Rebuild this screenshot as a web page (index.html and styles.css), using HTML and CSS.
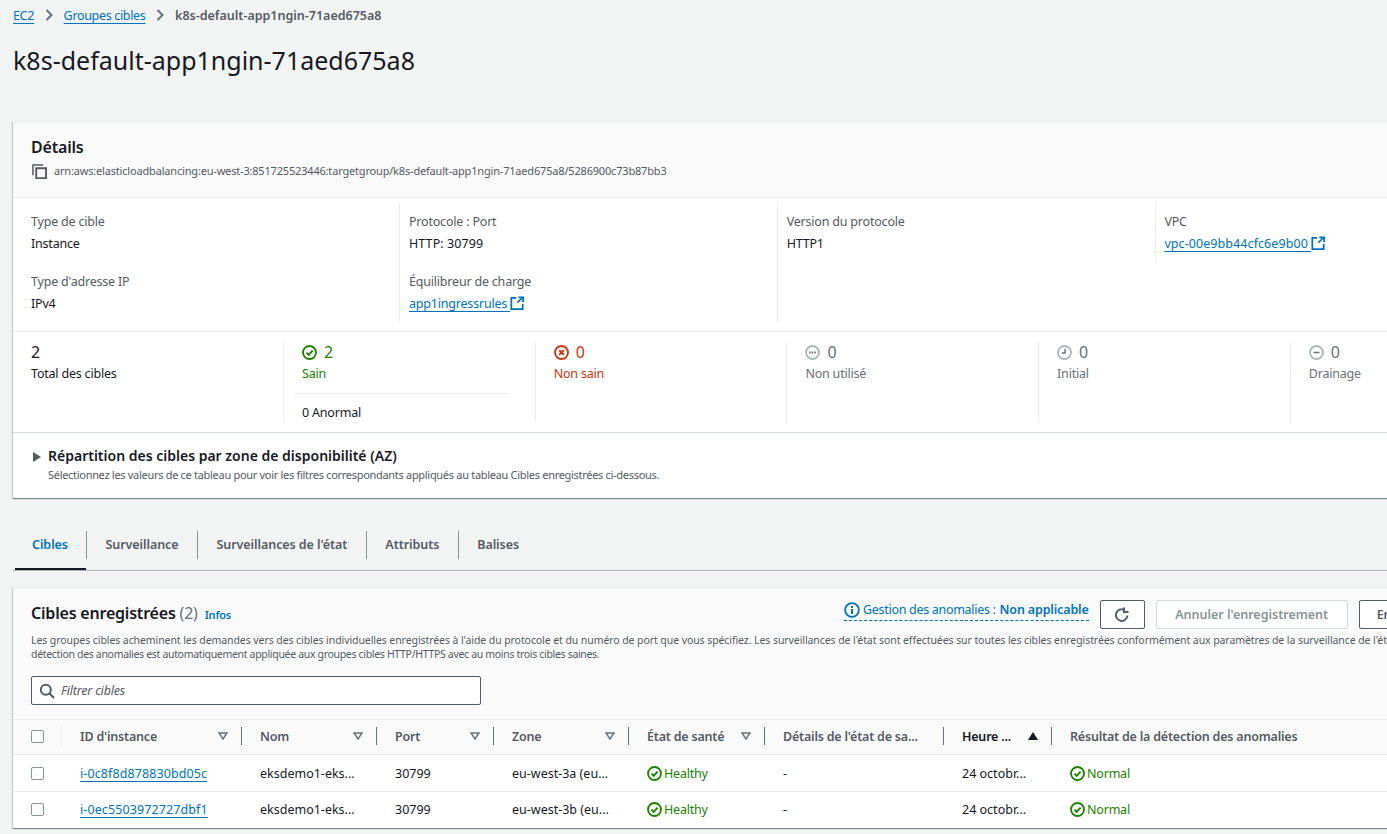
FILE: index.html
```html
<!doctype html>
<html lang="fr">
<head>
    <meta charset="UTF-8">
    <title>k8s-default-app1ngin-71aed675a8</title>
    <link rel="stylesheet" href="styles.css">
</head>
<body>
    <svg class="defs" width="0" height="0">
        <symbol id="i-ext" viewBox="0 0 16 16"><path d="M14.500 9v6H1.500V2H7" fill="none" stroke="currentColor" stroke-width="2"/><path d="M8.500 7.500L14 2M9.500 1.500H15V7" fill="none" stroke="currentColor" stroke-width="2"/></symbol>
        <symbol id="i-ok" viewBox="0 0 16 16"><circle cx="8" cy="8" r="6.900" fill="none" stroke="currentColor" stroke-width="2"/><path d="M4.800 8.200l2.300 2.300 4.200-4.600" fill="none" stroke="currentColor" stroke-width="2"/></symbol>
        <symbol id="i-bad" viewBox="0 0 16 16"><circle cx="8" cy="8" r="6.900" fill="none" stroke="currentColor" stroke-width="2"/><path d="M5.600 5.600l4.800 4.800M10.400 5.600l-4.800 4.800" fill="none" stroke="currentColor" stroke-width="2"/></symbol>
        <symbol id="i-unused" viewBox="0 0 16 16"><circle cx="8" cy="8" r="6.900" fill="none" stroke="currentColor" stroke-width="2"/><path d="M4.500 7h1.600v2H4.500zM7.200 7h1.600v2H7.200zM9.900 7h1.600v2H9.900z" fill="#687078"/></symbol>
        <symbol id="i-clock" viewBox="0 0 16 16"><circle cx="8" cy="8" r="6.900" fill="none" stroke="currentColor" stroke-width="2"/><path d="M8.600 4v4.600H5.200" fill="none" stroke="#687078" stroke-width="1.500"/></symbol>
        <symbol id="i-minus" viewBox="0 0 16 16"><circle cx="8" cy="8" r="6.900" fill="none" stroke="currentColor" stroke-width="2"/><path d="M4.800 8h6.400" fill="none" stroke="#687078" stroke-width="1.600"/></symbol>
        <symbol id="i-filter" viewBox="0 0 10 8"><path d="M1 1h8L5 7z" fill="none" stroke="currentColor" stroke-width="1.500"/></symbol>
    </svg>

    <nav class="crumbs">
        <a href="#">EC2</a>
        <svg class="crumb-sep" width="16" height="16" viewBox="0 0 16 16"><path d="M5.500 3L10.500 8l-5 5" fill="none" stroke="currentColor" stroke-width="2"/></svg>
        <a href="#">Groupes cibles</a>
        <svg class="crumb-sep" width="16" height="16" viewBox="0 0 16 16"><path d="M5.500 3L10.500 8l-5 5" fill="none" stroke="currentColor" stroke-width="2"/></svg>
        <span class="crumb-current">k8s-default-app1ngin-71aed675a8</span>
    </nav>

    <h1>k8s-default-app1ngin-71aed675a8</h1>

    <section class="card details">
        <header class="details-head">
            <h2>Détails</h2>
            <div class="arn">
                <svg class="arn-copy" width="15" height="15" viewBox="0 0 16 16"><path d="M1 12V1h11" fill="none" stroke="currentColor" stroke-width="1.600"/><path d="M4.500 4.500h10.500v10.500H4.500z" fill="none" stroke="currentColor" stroke-width="2"/></svg>
                <span>arn:aws:elasticloadbalancing:eu-west-3:851725523446:targetgroup/k8s-default-app1ngin-71aed675a8/5286900c73b87bb3</span>
            </div>
        </header>

        <div class="props">
            <div class="prop-col">
                <div class="prop"><div class="prop-label">Type de cible</div><div class="prop-value">Instance</div></div>
                <div class="prop"><div class="prop-label">Type d'adresse IP</div><div class="prop-value">IPv4</div></div>
            </div>
            <div class="prop-col">
                <div class="prop"><div class="prop-label">Protocole : Port</div><div class="prop-value wide">HTTP: 30799</div></div>
                <div class="prop"><div class="prop-label">Équilibreur de charge</div><div class="prop-value"><a href="#">app1ingressrules&nbsp;</a><svg class="ext"><use href="#i-ext"/></svg></div></div>
            </div>
            <div class="prop-col prop-col-open">
                <div class="prop"><div class="prop-label">Version du protocole</div><div class="prop-value">HTTP1</div></div>
            </div>
            <div class="prop-col prop-col-short">
                <div class="prop"><div class="prop-label">VPC</div><div class="prop-value wide"><a href="#">vpc-00e9bb44cfc6e9b00&nbsp;</a><svg class="ext"><use href="#i-ext"/></svg></div></div>
            </div>
        </div>

        <div class="stats">
            <div class="stat stat-first">
                <div class="stat-num">2</div>
                <div class="stat-label">Total des cibles</div>
            </div>
            <div class="stat stat-ok">
                <div class="stat-num"><svg class="stat-icon"><use href="#i-ok"/></svg>2</div>
                <div class="stat-label">Sain</div>
                <div class="stat-extra">0 Anormal</div>
            </div>
            <div class="stat stat-bad">
                <div class="stat-num"><svg class="stat-icon"><use href="#i-bad"/></svg>0</div>
                <div class="stat-label">Non sain</div>
            </div>
            <div class="stat stat-off">
                <div class="stat-num"><svg class="stat-icon"><use href="#i-unused"/></svg>0</div>
                <div class="stat-label">Non utilisé</div>
            </div>
            <div class="stat stat-off">
                <div class="stat-num"><svg class="stat-icon"><use href="#i-clock"/></svg>0</div>
                <div class="stat-label">Initial</div>
            </div>
            <div class="stat stat-off">
                <div class="stat-num"><svg class="stat-icon"><use href="#i-minus"/></svg>0</div>
                <div class="stat-label">Drainage</div>
            </div>
        </div>

        <div class="az">
            <span class="az-caret"></span>
            <div>
                <h3>Répartition des cibles par zone de disponibilité (AZ)</h3>
                <p>Sélectionnez les valeurs de ce tableau pour voir les filtres correspondants appliqués au tableau Cibles enregistrées ci-dessous.</p>
            </div>
        </div>
    </section>

    <div class="tabs">
        <a class="tab tab-active" href="#">Cibles</a>
        <a class="tab" href="#">Surveillance</a>
        <a class="tab" href="#">Surveillances de l'état</a>
        <a class="tab" href="#">Attributs</a>
        <a class="tab" href="#">Balises</a>
    </div>

    <section class="card targets">
        <div class="targets-head">
            <div class="targets-top">
                <h2>Cibles enregistrées <span class="count">(2)</span> <a class="info" href="#">Infos</a></h2>
                <div class="targets-actions">
                    <span class="anomaly">
                        <svg width="16" height="16" viewBox="0 0 16 16"><circle cx="8" cy="8" r="6.900" fill="none" stroke="currentColor" stroke-width="1.800"/><path d="M8 7v5M8 4v2" fill="none" stroke="currentColor" stroke-width="2"/></svg>
                        Gestion des anomalies : <b>Non applicable</b>
                    </span>
                    <button class="btn btn-icon"><svg width="16" height="16" viewBox="0 0 16 16"><path d="M13.500 8.500A5.800 5.800 0 1 1 10.500 3" fill="none" stroke="currentColor" stroke-width="2"/><path d="M10 0.500v4.500h4.500" fill="none" stroke="currentColor" stroke-width="2"/></svg></button>
                    <button class="btn btn-off">Annuler l'enregistrement</button>
                    <button class="btn">Enregistrer des cibles</button>
                </div>
            </div>
            <p class="targets-desc">Les groupes cibles acheminent les demandes vers des cibles individuelles enregistrées à l'aide du protocole et du numéro de port que vous spécifiez. Les surveillances de l'état sont effectuées sur toutes les cibles enregistrées conformément aux paramètres de la surveillance de l'état du groupe cible.<br><span class="desc-second">détection des anomalies est automatiquement appliquée aux groupes cibles HTTP/HTTPS avec au moins trois cibles saines.</span></p>
            <div class="filter">
                <svg width="16" height="16" viewBox="0 0 16 16"><circle cx="6.800" cy="6.800" r="5" fill="none" stroke="currentColor" stroke-width="2"/><path d="M10.500 10.500l4.500 4.500" fill="none" stroke="currentColor" stroke-width="2"/></svg>
                <span>Filtrer cibles</span>
            </div>
        </div>

        <table class="grid">
            <colgroup>
                <col class="c-check"><col class="c-id"><col class="c-name"><col class="c-port"><col class="c-zone"><col class="c-health"><col class="c-detail"><col class="c-time"><col class="c-result">
            </colgroup>
            <thead>
                <tr>
                    <th><div class="th-in th-check"><span class="box"></span></div></th>
                    <th><div class="th-in">ID d'instance<svg class="sort"><use href="#i-filter"/></svg></div></th>
                    <th><div class="th-in">Nom<svg class="sort"><use href="#i-filter"/></svg></div></th>
                    <th><div class="th-in">Port<svg class="sort"><use href="#i-filter"/></svg></div></th>
                    <th><div class="th-in">Zone<svg class="sort"><use href="#i-filter"/></svg></div></th>
                    <th><div class="th-in">État de santé<svg class="sort"><use href="#i-filter"/></svg></div></th>
                    <th><div class="th-in">Détails de l'état de sa...</div></th>
                    <th class="th-sorted"><div class="th-in">Heure ...<span class="sort-up"></span></div></th>
                    <th class="th-last"><div class="th-in">Résultat de la détection des anomalies</div></th>
                </tr>
            </thead>
            <tbody>
                <tr>
                    <td><span class="box"></span></td>
                    <td><a class="id-link" href="#">i-0c8f8d878830bd05c</a></td>
                    <td>eksdemo1-eks...</td>
                    <td>30799</td>
                    <td>eu-west-3a (eu...</td>
                    <td class="good"><svg class="good-icon"><use href="#i-ok"/></svg>Healthy</td>
                    <td>-</td>
                    <td>24 octobr...</td>
                    <td class="good"><svg class="good-icon"><use href="#i-ok"/></svg>Normal</td>
                </tr>
                <tr>
                    <td><span class="box"></span></td>
                    <td><a class="id-link" href="#">i-0ec5503972727dbf1</a></td>
                    <td>eksdemo1-eks...</td>
                    <td>30799</td>
                    <td>eu-west-3b (eu...</td>
                    <td class="good"><svg class="good-icon"><use href="#i-ok"/></svg>Healthy</td>
                    <td>-</td>
                    <td>24 octobr...</td>
                    <td class="good"><svg class="good-icon"><use href="#i-ok"/></svg>Normal</td>
                </tr>
            </tbody>
        </table>
    </section>
</body>
</html>
```

FILE: styles.css
```css
html, body {
    overflow: hidden;
}
body {
    margin: 0;
    height: 834px;
    background-color: #f2f3f3;
    color: #16191f;
    font-family: "Noto Sans", sans-serif;
    font-size: 12.5px;
    letter-spacing: -0.2px;
}
a {
    color: #0073bb;
    text-underline-offset: 3px;
}
.defs {
    position: absolute;
}

.crumbs {
    display: flex;
    align-items: center;
    height: 16px;
    padding: 7px 0 0 13px;
    white-space: nowrap;
    letter-spacing: -0.33px;
}
.crumb-sep {
    margin: 0 6.800px;
    color: #687078;
}
.crumb-current {
    color: #545b64;
    font-weight: 600;
    letter-spacing: 0;
}

h1 {
    margin: 21px 0 0 13px;
    height: 77px;
    font-size: 25px;
    line-height: 32px;
    font-weight: 400;
    letter-spacing: 0;
}

.card {
    width: 1560px;
    margin-left: 13px;
    background-color: #fff;
    box-shadow: 0 1px 1px 0 rgba(0, 28, 36, 0.3), 1px 1px 1px 0 rgba(0, 28, 36, 0.15), -1px 1px 1px 0 rgba(0, 28, 36, 0.15);
    border-top: 1px solid #eaeded;
}

.details-head {
    height: 76px;
    box-sizing: border-box;
    padding: 14px 18px 0;
    background-color: #fafafa;
    border-bottom: 1px solid #eaeded;
}
h2 {
    margin: 0;
    font-size: 16px;
    line-height: 22px;
    font-weight: 600;
}
.arn {
    display: flex;
    align-items: center;
    gap: 7px;
    margin-top: 5px;
    font-size: 11px;
    line-height: 16px;
    letter-spacing: -0.18px;
    color: #545b64;
}
.arn-copy {
    margin-left: 1px;
    color: #545b64;
}

.props {
    display: flex;
    height: 134px;
    box-sizing: border-box;
    padding: 5px 0 10px;
    border-bottom: 1px solid #eaeded;
}
.prop-col {
    width: 377.700px;
    box-sizing: border-box;
    padding-left: 9px;
    border-right: 1px solid #eaeded;
}
.prop-col:first-child {
    width: 387px;
    padding-left: 18px;
}
.prop-col-open {
    border-right: none;
}
.prop-col-short {
    height: 60px;
    padding-left: 8px;
    border-right: none;
    border-left: 1px solid #eaeded;
}
.prop {
    height: 60px;
    padding-top: 10px;
    box-sizing: border-box;
}
.prop-label {
    line-height: 17px;
    color: #545b64;
}
.prop-value {
    margin-top: 5px;
    line-height: 17px;
}
.prop-value.wide {
    letter-spacing: 0.08px;
}
.ext {
    width: 14px;
    height: 14px;
    color: #0073bb;
    vertical-align: -2px;
}

.stats {
    display: flex;
    height: 101px;
    box-sizing: border-box;
    padding-top: 11px;
    border-bottom: 1px solid #d5dbdb;
}
.stat {
    width: 251.700px;
    height: 80px;
    box-sizing: border-box;
    padding-left: 18px;
    border-left: 1px solid #eaeded;
}
.stat-first {
    width: 270px;
    border-left: none;
}
.stat-num {
    display: flex;
    align-items: center;
    height: 18px;
    font-size: 16px;
    letter-spacing: 0;
}
.stat-icon {
    width: 15px;
    height: 15px;
    margin-right: 7px;
}
.stat-label {
    margin-top: 4px;
    line-height: 17px;
}
.stat-extra {
    width: 206px;
    margin: 11px 0 0 -9px;
    padding: 10px 0 0 9px;
    line-height: 17px;
    border-top: 1px solid #eaeded;
}
.stat-ok {
    color: #1d8102;
}
.stat-ok .stat-extra {
    color: #16191f;
}
.stat-bad {
    color: #d13212;
}
.stat-off {
    color: #687078;
}
.stat-off .stat-icon {
    color: #aab7b8;
}

.az {
    display: flex;
    height: 65px;
    box-sizing: border-box;
    padding: 13px 0 0 20px;
}
.az-caret {
    width: 0;
    height: 0;
    margin: 6px 7px 0 0;
    border-left: 8.500px solid #545b64;
    border-top: 5px solid transparent;
    border-bottom: 5px solid transparent;
}
.az h3 {
    margin: 0;
    font-size: 14px;
    line-height: 20px;
    font-weight: 600;
    letter-spacing: 0;
}
.az p {
    margin: 1px 0 0;
    font-size: 11px;
    line-height: 16px;
    letter-spacing: -0.3px;
    color: #545b64;
}

.tabs {
    display: flex;
    height: 40px;
    margin: 32px 0 16px 13px;
    padding-left: 2px;
    border-bottom: 1px solid #aab7b8;
}
.tab {
    position: relative;
    display: flex;
    align-items: center;
    height: 27px;
    margin-top: 1px;
    padding: 0 18.500px 1px;
    border-left: 1px solid #879596;
    color: #545b64;
    font-weight: 600;
    letter-spacing: -0.07px;
    text-decoration: none;
}
.tab-active {
    padding: 0 18px 1px 17px;
    border-left: none;
    color: #0073bb;
}
.tab-active::after {
    content: "";
    position: absolute;
    left: 0;
    right: 0;
    bottom: -11px;
    height: 2px;
    background-color: #16191f;
}

.targets-head {
    height: 132px;
    box-sizing: border-box;
    padding: 12px 0 0 18px;
    background-color: #fafafa;
    border-bottom: 1px solid #eaeded;
}
.targets-top {
    display: flex;
    height: 29px;
}
.targets-head h2 {
    width: 813px;
    flex: none;
    line-height: 26px;
}
.count {
    color: #687078;
    font-weight: 400;
}
.info {
    margin-left: 3px;
    font-size: 11px;
    font-weight: 600;
    text-decoration: none;
}
.targets-actions {
    display: flex;
    gap: 11px;
    white-space: nowrap;
}
.anomaly {
    display: flex;
    align-items: center;
    gap: 3px;
    height: 19px;
    padding-bottom: 1px;
    border-bottom: 1px dashed #0073bb;
    color: #0073bb;
    letter-spacing: -0.3px;
}
.anomaly b {
    font-weight: 600;
    margin-left: 1px;
    letter-spacing: -0.15px;
}
.btn {
    height: 29px;
    padding: 0 17px;
    box-sizing: border-box;
    background-color: #fff;
    border: 1px solid #545b64;
    border-radius: 2px;
    color: #545b64;
    font: 600 12.500px "Noto Sans", sans-serif;
    letter-spacing: 0;
}
.btn-icon {
    display: flex;
    align-items: center;
    justify-content: center;
    width: 45px;
    padding: 0;
}
.btn-off {
    width: 192px;
    padding: 0;
    border-color: #d5dbdb;
    color: #879596;
}
.targets-desc {
    margin: 4px 0 0;
    font-size: 10.500px;
    line-height: 14px;
    letter-spacing: -0.08px;
    color: #545b64;
    white-space: nowrap;
}
.desc-second {
    letter-spacing: -0.32px;
}
.filter {
    display: flex;
    align-items: center;
    gap: 6px;
    width: 450px;
    height: 29px;
    margin-top: 15px;
    padding-left: 7px;
    box-sizing: border-box;
    background-color: #fff;
    border: 1px solid #545b64;
    border-radius: 2px;
    color: #545b64;
    font-style: italic;
}
.filter svg {
    flex: none;
}

.grid {
    width: 1560px;
    border-collapse: collapse;
    table-layout: fixed;
    text-align: left;
}
.c-check { width: 49px; }
.c-id { width: 180px; }
.c-name { width: 135px; }
.c-port { width: 117px; }
.c-zone { width: 135px; }
.c-health { width: 136px; }
.c-detail { width: 179px; }
.c-time { width: 108px; }
.grid th {
    height: 32px;
    padding: 0 0 2px;
    background-color: #fafafa;
    border-bottom: 1px solid #eaeded;
    color: #545b64;
    font-weight: 600;
}
.th-in {
    display: flex;
    align-items: center;
    justify-content: space-between;
    height: 18px;
    padding: 0 13px 0 18px;
    border-right: 1px solid #687078;
}
.th-check {
    border-right-color: #eaeded;
}
.th-last .th-in {
    border-right: none;
}
.grid .th-sorted {
    color: #16191f;
}
.sort {
    width: 10px;
    height: 8px;
    color: #687078;
}
.sort-up {
    width: 0;
    height: 0;
    border-left: 5px solid transparent;
    border-right: 5px solid transparent;
    border-bottom: 8px solid #16191f;
}
.grid td {
    height: 35px;
    padding: 1px 0 0 18px;
    border-bottom: 1px solid #eaeded;
    white-space: nowrap;
    letter-spacing: 0;
}
.grid tr:last-child td {
    height: 34px;
    padding-top: 0;
    padding-bottom: 2px;
    border-bottom: none;
}
.id-link {
    letter-spacing: 0.1px;
}
.box {
    display: block;
    flex: none;
    width: 11px;
    height: 11px;
    background-color: #fff;
    border: 1px solid #879596;
    border-radius: 2px;
}
.grid .good {
    color: #1d8102;
    letter-spacing: -0.2px;
}
.good-icon {
    width: 15px;
    height: 15px;
    margin-right: 2px;
    vertical-align: -3px;
}
```
